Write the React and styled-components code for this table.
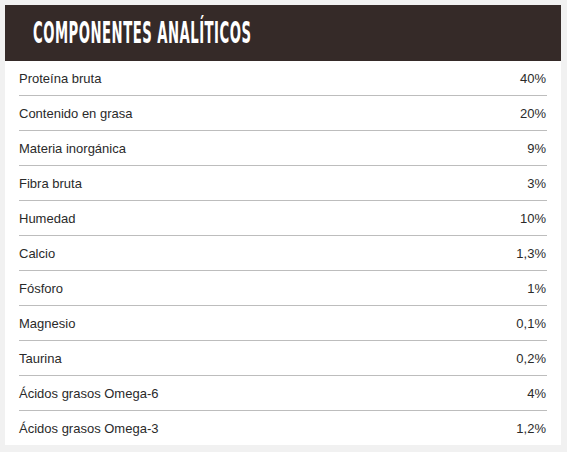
import React from "react";
import styled, { createGlobalStyle } from "styled-components";

const GlobalStyle = createGlobalStyle`
  html, body {
    margin: 0;
    padding: 0;
    background-color: #f1f1f1;
  }
  body {
    font-family: "Liberation Sans", Arial, sans-serif;
  }
`;

const Page = styled.div`
  padding: 5px 6px 9px 5px;
`;

const Card = styled.section`
  background-color: #fff;
  width: 556px;
`;

const Header = styled.header`
  display: flex;
  align-items: center;
  height: 56px;
  background-color: #352a28;
  padding-left: 28px;
  overflow: hidden;
`;

const Title = styled.h2`
  margin: 0;
  display: inline-block;
  white-space: nowrap;
  color: #fff;
  font-family: "DejaVu Sans", sans-serif;
  font-stretch: condensed;
  font-weight: 700;
  font-size: 30px;
  line-height: 1;
  transform: scaleX(0.49);
  transform-origin: left center;
  letter-spacing: 1px;
`;

const List = styled.div`
  display: flex;
  flex-direction: column;
  padding: 0 14px 0 14px;
`;

const Row = styled.div`
  display: flex;
  justify-content: space-between;
  align-items: center;
  height: 34px;
  border-top: ${(p) => (p.$first ? "none" : "1px solid #bdbdbd")};
  font-size: 13px;
  color: #2a2a2a;
`;

const Label = styled.span``;

const Value = styled.span`
  padding-right: 1px;
`;

const data = [
  ["Proteína bruta", "40%"],
  ["Contenido en grasa", "20%"],
  ["Materia inorgánica", "9%"],
  ["Fibra bruta", "3%"],
  ["Humedad", "10%"],
  ["Calcio", "1,3%"],
  ["Fósforo", "1%"],
  ["Magnesio", "0,1%"],
  ["Taurina", "0,2%"],
  ["Ácidos grasos Omega-6", "4%"],
  ["Ácidos grasos Omega-3", "1,2%"],
];

const App = () => {
  return (
    <Page>
      <GlobalStyle />
      <Card>
        <Header>
          <Title>COMPONENTES ANALÍTICOS</Title>
        </Header>
        <List>
          {data.map(([name, value], i) => (
            <Row key={name} $first={i === 0}>
              <Label>{name}</Label>
              <Value>{value}</Value>
            </Row>
          ))}
        </List>
      </Card>
    </Page>
  );
};

export default App;
